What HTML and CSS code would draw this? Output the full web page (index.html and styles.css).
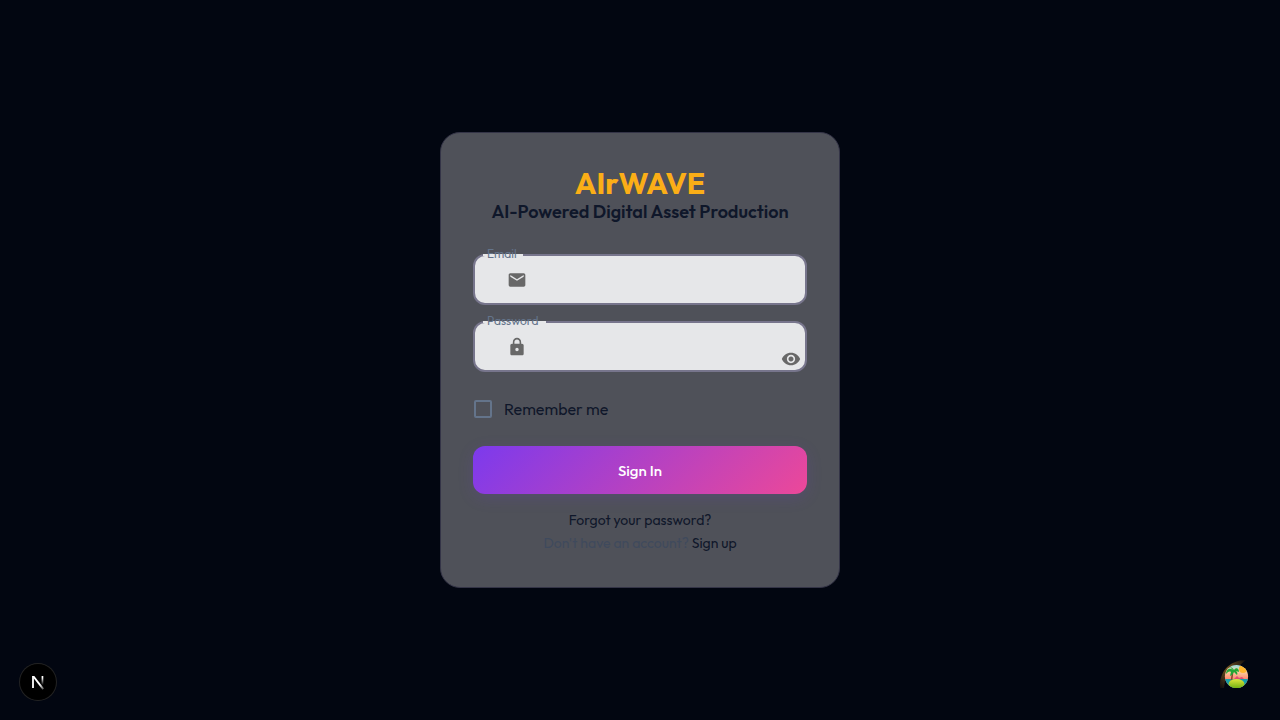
FILE: index.html
```html
<!DOCTYPE html>
<html lang="en">
<head>
<meta charset="utf-8">
<meta name="viewport" content="width=device-width, initial-scale=1">
<title>AIrWAVE – Sign In</title>
<link rel="stylesheet" href="styles.css">
</head>
<body>
<main class="page">
  <form class="card">
    <h1 class="brand">AIrWAVE</h1>
    <h2 class="tagline">AI-Powered Digital Asset Production</h2>

    <div class="field">
      <label class="field-label" for="email">Email</label>
      <svg class="field-icon" viewBox="0 0 24 24" aria-hidden="true"><path d="M20 4H4c-1.100 0-1.990.9-1.990 2L2 18c0 1.100.9 2 2 2h16c1.100 0 2-.9 2-2V6c0-1.100-.9-2-2-2m0 4-8 5-8-5V6l8 5 8-5z"/></svg>
      <input class="field-input" id="email" type="email">
    </div>

    <div class="field">
      <label class="field-label field-label-wide" for="password">Password</label>
      <svg class="field-icon" viewBox="0 0 24 24" aria-hidden="true"><path d="M18 8h-1V6c0-2.760-2.240-5-5-5S7 3.240 7 6v2H6c-1.100 0-2 .9-2 2v10c0 1.100.9 2 2 2h12c1.100 0 2-.9 2-2V10c0-1.100-.9-2-2-2m-6 9c-1.100 0-2-.9-2-2s.9-2 2-2 2 .9 2 2-.9 2-2 2m3.100-9H8.900V6c0-1.710 1.390-3.100 3.100-3.100s3.100 1.390 3.100 3.100z"/></svg>
      <input class="field-input" id="password" type="password">
      <button class="reveal" type="button" aria-label="Show password">
        <svg viewBox="0 0 24 24" aria-hidden="true"><path d="M12 4.500C7 4.500 2.730 7.610 1 12c1.730 4.390 6 7.500 11 7.500s9.270-3.110 11-7.500c-1.730-4.390-6-7.500-11-7.500M12 17c-2.760 0-5-2.240-5-5s2.240-5 5-5 5 2.240 5 5-2.240 5-5 5m0-8c-1.660 0-3 1.340-3 3s1.340 3 3 3 3-1.340 3-3-1.340-3-3-3"/></svg>
      </button>
    </div>

    <div class="remember">
      <input class="remember-box" id="remember" type="checkbox">
      <label for="remember">Remember me</label>
    </div>

    <button class="submit" type="submit">Sign In</button>

    <div class="links">
      <a class="link" href="#forgot">Forgot your password?</a>
      <p class="signup">Don't have an account? <a class="link" href="#signup">Sign up</a></p>
    </div>
  </form>
</main>

<button class="dev-badge" type="button" aria-label="Developer tools">
  <svg viewBox="0 0 36 36" aria-hidden="true">
    <defs>
      <linearGradient id="stroke-fade" x1="0" y1="0" x2="0" y2="1"><stop offset="0.2" stop-color="#fff"/><stop offset="1" stop-color="#fff" stop-opacity="0"/></linearGradient>
      <linearGradient id="tail-fade" gradientUnits="userSpaceOnUse" x1="13" y1="13" x2="24" y2="26"><stop offset="0.600" stop-color="#fff"/><stop offset="1" stop-color="#fff" stop-opacity="0.200"/></linearGradient>
    </defs>
    <path d="M13 24V12" stroke="#fff" stroke-width="1.800" fill="none"/>
    <path d="M12.100 12h2.200L24 24.600l-1.500 1.100L13.500 14z" fill="url(#tail-fade)"/>
    <path d="M21.600 12h1.700v9h-1.700z" fill="url(#stroke-fade)"/>
  </svg>
</button>

<button class="island-badge" type="button" aria-label="Query tools">
  <svg viewBox="0 0 40 40" aria-hidden="true">
    <defs>
      <linearGradient id="sky" x1="0" y1="0" x2="0" y2="1"><stop offset="0" stop-color="#8de0e8"/><stop offset="0.300" stop-color="#fbd0a3"/><stop offset="0.600" stop-color="#ff8a70"/></linearGradient>
      <linearGradient id="grass" x1="0" y1="0" x2="0" y2="1"><stop offset="0" stop-color="#dfe63c"/><stop offset="1" stop-color="#68ac10"/></linearGradient>
      <linearGradient id="halo" x1="0" y1="1" x2="1" y2="0"><stop offset="0" stop-color="#0d0b0e"/><stop offset="0.500" stop-color="#755420"/><stop offset="1" stop-color="#0d0b0e"/></linearGradient>
      <clipPath id="disc"><circle cx="20.500" cy="20.500" r="11.600"/></clipPath>
    </defs>
    <path d="M4 32C3 16 13 4 30 4L24 9C14 9 8 16 9 25L8 32z" fill="url(#halo)"/>
    <g clip-path="url(#disc)">
      <path d="M8 8h25v25H8z" fill="url(#sky)"/>
      <circle cx="27" cy="13" r="4" fill="#ffb52c"/>
      <path d="M8 23h25v10H8z" fill="#159faa"/>
      <path d="M18 23l3-3 2 2 3-1 2 2z" fill="#e34a73"/>
      <path d="M15.500 26c0-4 1-7 1-10" stroke="#8b4930" stroke-width="1.600" fill="none"/>
      <path d="M17 14c-4-3-7 0-7 4 2-2 3-3 5-2l-1 4c3-1 3-3 4-4l3 3c1-2 0-3-1-4l3 1c0-4-3-5-5-2-1-2-3-3-4-3z" fill="#25a735"/>
      <ellipse cx="20.500" cy="28" rx="8" ry="5" fill="url(#grass)"/>
    </g>
  </svg>
</button>
</body>
</html>
```
FILE: styles.css
```css
* {
  box-sizing: border-box;
}

body {
  margin: 0;
  background: #020611;
  color: #0f172a;
  font-family: Outfit, Lato, sans-serif;
}

.page {
  display: flex;
  align-items: center;
  justify-content: center;
  min-height: 100vh;
  padding: 16px;
}

.card {
  width: 100%;
  max-width: 400px;
  padding: 32px;
  border: 1px solid #343447;
  border-radius: 20px;
  background: #4f5159;
}

.brand {
  margin: 0;
  color: #fbae17;
  font-size: 30px;
  font-weight: 700;
  line-height: 36px;
  text-align: center;
}

.tagline {
  margin: 0 0 32px;
  font-size: 18px;
  font-weight: 600;
  line-height: 21px;
  text-align: center;
}

.field {
  position: relative;
  display: flex;
  align-items: center;
  height: 51px;
  margin-bottom: 16px;
  padding: 1px 32px 0;
  border: 2px solid #77758c;
  border-radius: 12px;
  background: #e6e7e9;
}

.field-label {
  position: absolute;
  top: -10px;
  left: 8px;
  width: 40px;
  padding: 0 4px;
  background: linear-gradient(#e6e7e9, #e6e7e9) 0 8px / 100% 2px no-repeat;
  color: #64748b;
  font-size: 12px;
  line-height: 16px;
}

.field-label-wide {
  width: 63px;
}

.field-icon {
  flex: none;
  width: 20px;
  height: 20px;
  fill: #686868;
}

.field-input {
  flex: 1;
  min-width: 0;
  height: 100%;
  padding: 0 12px;
  border: 0;
  outline: 0;
  background: transparent;
  font: inherit;
}

.reveal {
  position: absolute;
  right: 4px;
  bottom: 1px;
  width: 20px;
  height: 20px;
  padding: 0;
  border: 0;
  background: none;
}

.reveal svg {
  display: block;
  fill: #686868;
}

.remember {
  display: flex;
  align-items: center;
  gap: 12px;
  height: 42px;
  margin-bottom: 16px;
  padding-left: 1px;
  font-size: 16px;
}

.remember-box {
  width: 18px;
  height: 18px;
  margin: 0;
  border: 2px solid #64748b;
  border-radius: 2px;
  appearance: none;
}

.remember-box:checked {
  background: #64748b;
}

.submit {
  width: 100%;
  height: 48px;
  border: 0;
  border-radius: 12px;
  background: linear-gradient(135deg, #7c3aed, #ec4899);
  box-shadow: 0 4px 16px rgba(124, 58, 237, 0.15);
  color: #fff;
  font: inherit;
  font-size: 15px;
  font-weight: 500;
}

.links {
  padding-top: 15px;
  font-size: 14px;
  line-height: 23px;
  text-align: center;
}

.link {
  color: #0f172a;
  text-decoration: none;
}

.signup {
  margin: 0;
  color: #3f4a5d;
}

.dev-badge,
.island-badge {
  position: fixed;
  padding: 0;
  border: 0;
}

.dev-badge {
  bottom: 20px;
  left: 20px;
  width: 36px;
  height: 36px;
  border-radius: 50%;
  background: #000;
  box-shadow: 0 0 0 1px #232323;
}

.island-badge {
  right: 24px;
  bottom: 24px;
  width: 40px;
  height: 40px;
  background: none;
}

.dev-badge svg,
.island-badge svg {
  display: block;
}
```
